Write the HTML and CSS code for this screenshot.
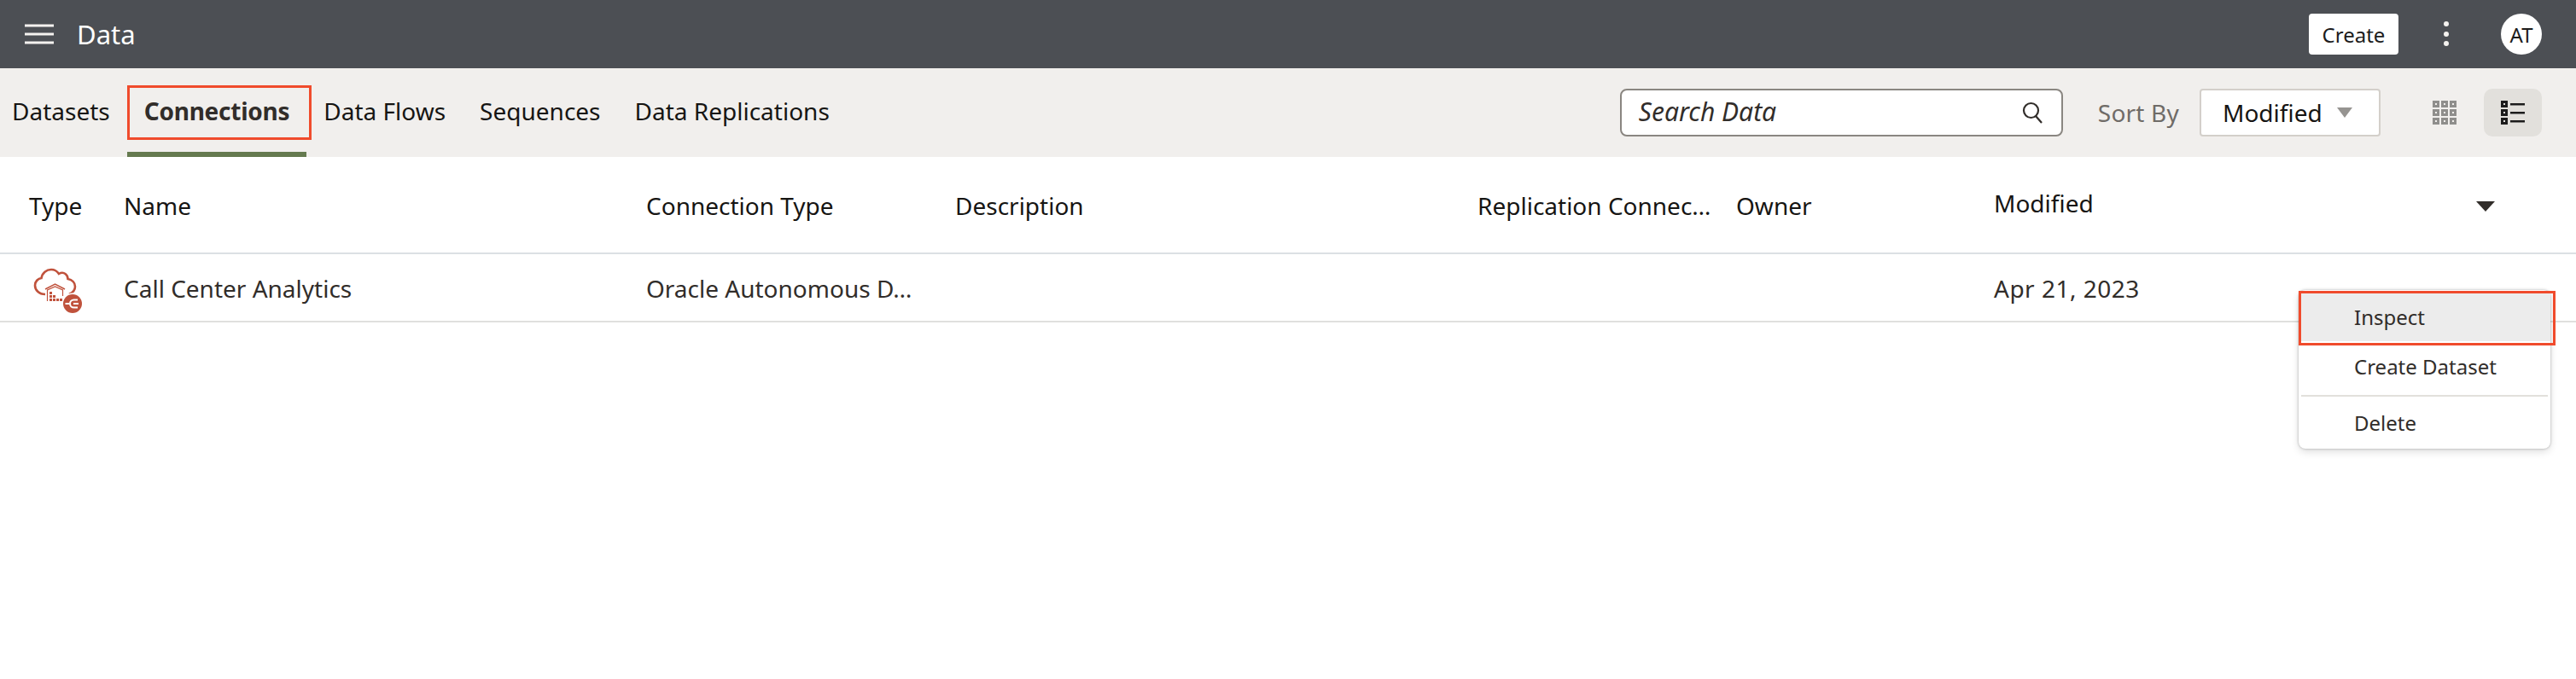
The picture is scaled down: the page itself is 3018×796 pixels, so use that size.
FILE: index.html
```html
<!DOCTYPE html>
<html lang="en">
<head>
<meta charset="utf-8">
<title>Data</title>
<link rel="stylesheet" href="styles.css">
</head>
<body>
<header class="topbar">
  <svg class="hamburger" width="34" height="26" viewBox="0 0 34 26"><path d="M0 3h34M0 13h34M0 23h34" stroke="#f4f2ef" stroke-width="3" fill="none"/></svg>
  <span class="title">Data</span>
  <span class="spacer"></span>
  <button class="create">Create</button>
  <svg class="dots" width="8" height="32" viewBox="0 0 8 32"><circle cx="4" cy="4" r="3" fill="#f4f2ef"/><circle cx="4" cy="16" r="3" fill="#f4f2ef"/><circle cx="4" cy="27" r="3" fill="#f4f2ef"/></svg>
  <span class="avatar">AT</span>
</header>

<div class="toolbar">
  <nav class="tabs">
    <a class="tab">Datasets</a>
    <a class="tab active">Connections</a>
    <a class="tab">Data Flows</a>
    <a class="tab">Sequences</a>
    <a class="tab">Data Replications</a>
  </nav>
  <span class="spacer"></span>
  <div class="search">
    <span class="search-text">Search Data</span>
    <svg width="24" height="26" viewBox="0 0 24 26"><circle cx="10.500" cy="10.500" r="8.500" fill="none" stroke="#312d2a" stroke-width="2.200"/><path d="M16 17l7 8" stroke="#312d2a" stroke-width="2.200" fill="none"/></svg>
  </div>
  <span class="sort-label">Sort By</span>
  <div class="select">
    <span>Modified</span>
    <svg width="18" height="12" viewBox="0 0 18 12"><path d="M0 0h18l-9 12z" fill="#969491"/></svg>
  </div>
  <svg class="grid-icon" width="28" height="28" viewBox="0 0 28 28">
    <g fill="#8f8e8c">
      <rect x="0" y="0" width="8" height="8"/><rect x="10" y="0" width="8" height="8"/><rect x="20" y="0" width="8" height="8"/>
      <rect x="0" y="10" width="8" height="8"/><rect x="10" y="10" width="8" height="8"/><rect x="20" y="10" width="8" height="8"/>
      <rect x="0" y="20" width="8" height="8"/><rect x="10" y="20" width="8" height="8"/><rect x="20" y="20" width="8" height="8"/>
    </g>
    <g fill="#f1efed">
      <rect x="3" y="3" width="2" height="2"/><rect x="13" y="3" width="2" height="2"/><rect x="23" y="3" width="2" height="2"/>
      <rect x="3" y="13" width="2" height="2"/><rect x="13" y="13" width="2" height="2"/><rect x="23" y="13" width="2" height="2"/>
      <rect x="3" y="23" width="2" height="2"/><rect x="13" y="23" width="2" height="2"/><rect x="23" y="23" width="2" height="2"/>
    </g>
  </svg>
  <div class="list-btn">
    <svg width="28" height="28" viewBox="0 0 28 28">
      <g fill="#1c1c1c">
        <rect x="0" y="0" width="8" height="8"/><rect x="0" y="10" width="8" height="8"/><rect x="0" y="20" width="8" height="8"/>
        <rect x="11" y="3" width="17" height="2.500"/><rect x="11" y="13" width="17" height="2.500"/><rect x="11" y="23" width="17" height="2.500"/>
      </g>
      <g fill="#e2e0dc"><rect x="3" y="3" width="2" height="2"/><rect x="3" y="13" width="2" height="2"/><rect x="3" y="23" width="2" height="2"/></g>
    </svg>
  </div>
</div>

<main class="table">
  <div class="row head">
    <span class="c-type">Type</span>
    <span class="c-name">Name</span>
    <span class="c-conn">Connection Type</span>
    <span class="c-desc">Description</span>
    <span class="c-repl">Replication Connec…</span>
    <span class="c-owner">Owner</span>
    <span class="c-mod mod-head">Modified</span>
    <svg class="sort-arrow" width="22" height="12" viewBox="0 0 22 12"><path d="M0 0h22l-11 12z" fill="#312d2a"/></svg>
  </div>
  <div class="row body">
    <span class="c-type">
      <svg class="conn-icon" width="60" height="60" viewBox="0 0 60 60">
        <path d="M17 35C9.500 35 5 30 5 24.500C5 20 8.500 16.500 12.500 16C13.500 10 18.500 6 24 6C28 6 31 8 33 11C35.500 9.500 38.500 9.500 40.500 11C42.500 12.500 43.500 14.500 43.500 17C48.500 18 52 21.500 52 26C52 30 49.500 33 45 35" fill="none" stroke="#c0523c" stroke-width="2.600"/>
        <path d="M17 29L28.500 23L40 29" fill="none" stroke="#c0523c" stroke-width="1.500"/>
        <path d="M19.500 43V30L28.500 26L37.500 30V37" fill="none" stroke="#c0523c" stroke-width="1.200"/>
        <g fill="#c0523c">
          <rect x="22" y="32" width="3" height="3"/><rect x="22" y="36" width="3" height="3"/><rect x="22" y="40" width="3" height="3"/>
          <rect x="26" y="36" width="3" height="3"/><rect x="26" y="40" width="3" height="3"/><rect x="30" y="40" width="3" height="3"/>
          <rect x="34" y="40" width="3" height="3"/>
        </g>
        <circle cx="49" cy="46" r="12.500" fill="#fff"/>
        <circle cx="49" cy="46" r="11" fill="#c0523c"/>
        <path d="M55 41.500H50.500A4.500 4.500 0 0 0 50.500 50.500H55M50 46H56M40.500 46H45" fill="none" stroke="#fff" stroke-width="2"/>
      </svg>
    </span>
    <span class="c-name">Call Center Analytics</span>
    <span class="c-conn">Oracle Autonomous D…</span>
    <span class="c-desc"></span>
    <span class="c-repl"></span>
    <span class="c-owner"></span>
    <span class="c-mod date">Apr 21, 2023</span>
  </div>
</main>

<div class="menu">
  <div class="menu-item first"><span>Inspect</span></div>
  <div class="menu-item second"><span>Create Dataset</span></div>
  <div class="menu-sep"></div>
  <div class="menu-item third"><span>Delete</span></div>
</div>
</body>
</html>
```

FILE: styles.css
```css
*, *::before, *::after { box-sizing: border-box; }
html, body { margin: 0; padding: 0; background: #fff; }
body {
  width: 3018px;
  height: 796px;
  overflow: hidden;
  position: relative;
  font-family: "Noto Sans", "Open Sans", sans-serif;
  color: #1c1c1c;
}
.spacer { flex: 1; }

.topbar {
  height: 80px;
  background: #4c4f54;
  display: flex;
  align-items: center;
  padding: 0 40px 0 29px;
}
.hamburger { display: block; }
.title { margin-left: 27px; font-size: 31px; color: #fff; }
.create {
  width: 105px;
  height: 48px;
  border: 0;
  border-radius: 4px;
  background: #fff;
  color: #1c1c1c;
  font: 24px "Noto Sans", sans-serif;
  padding: 0;
}
.dots { margin: 0 60px 0 52px; }
.avatar {
  width: 48px;
  height: 48px;
  border-radius: 50%;
  background: #fff;
  color: #1c1c1c;
  font-size: 24px;
  display: flex;
  align-items: center;
  justify-content: center;
}

.toolbar {
  height: 104px;
  background: #f1efed;
  display: flex;
  align-items: center;
  padding-right: 40px;
}
.tabs { display: flex; align-self: stretch; margin-left: -6px; }
.tab {
  position: relative;
  padding: 25px 20px 0;
  font-size: 28px;
  line-height: 50px;
  color: #161513;
}
.tab.active {
  font-weight: 700;
  letter-spacing: -0.25px;
  color: #312d2a;
  border-bottom: 6px solid #657a4f;
}
.tab.active::after {
  content: "";
  position: absolute;
  left: 0;
  right: -6px;
  top: 20px;
  height: 64px;
  border: 3px solid #f04b2c;
}
.search {
  width: 519px;
  height: 56px;
  background: #fff;
  border: 2px solid #8a8681;
  border-radius: 8px;
  display: flex;
  align-items: center;
  justify-content: space-between;
  padding: 0 22px 0 20px;
}
.search-text { font-size: 30px; font-style: italic; color: #312d2a; margin-bottom: 3px; }
.sort-label { margin-left: 41px; font-size: 28px; letter-spacing: .2px; color: #6f6b67; }
.select {
  margin-left: 24px;
  width: 212px;
  height: 56px;
  background: #fff;
  border: 2px solid #d3cfca;
  border-radius: 4px;
  display: flex;
  align-items: center;
  padding-left: 25px;
  font-size: 28px;
  color: #161513;
  gap: 17px;
}
.grid-icon { margin-left: 61px; }
.list-btn {
  margin-left: 32px;
  width: 68px;
  height: 56px;
  background: #e2e0dc;
  border-radius: 10px;
  display: flex;
  align-items: center;
  justify-content: center;
}

.row {
  display: grid;
  grid-template-columns: 145px 612px 362px 612px 303px 302px 1fr;
  align-items: center;
  font-size: 28px;
  white-space: nowrap;
  position: relative;
}
.c-type { padding-left: 34px; display: block; }
.row.head {
  height: 114px;
  border-bottom: 2px solid #dce0e4;
  color: #161513;
  padding-top: 2px;
}
.mod-head { position: relative; top: -3px; }
.sort-arrow { position: absolute; left: 2901px; top: 52px; }
.row.body {
  height: 80px;
  border-bottom: 2px solid #e0e0de;
  color: #312d2a;
  padding-top: 1px;
}
.date { letter-spacing: .5px; }
.conn-icon { display: block; margin: 5px 0 0 2px; }

.menu {
  position: absolute;
  left: 2693px;
  top: 340px;
  width: 295px;
  height: 186px;
  background: #fff;
  border-radius: 8px;
  box-shadow: 0 0 3px rgba(0,0,0,.3), 0 4px 10px rgba(0,0,0,.12);
  font-size: 24px;
  color: #312d2a;
}
.menu-item { display: flex; align-items: center; padding-left: 65px; }
.menu-item.first { height: 57px; margin-top: 3px; background: #ececec; position: relative; }
.menu-item.first::after {
  content: "";
  position: absolute;
  left: 0;
  right: -6px;
  top: -2px;
  height: 64px;
  border: 3px solid #f04b2c;
}
.menu-item.second { height: 61px; padding-bottom: 2px; }
.menu-sep { height: 2px; margin: 2px 3px 0; background: #e2e0dc; }
.menu-item.third { height: 61px; }
```
